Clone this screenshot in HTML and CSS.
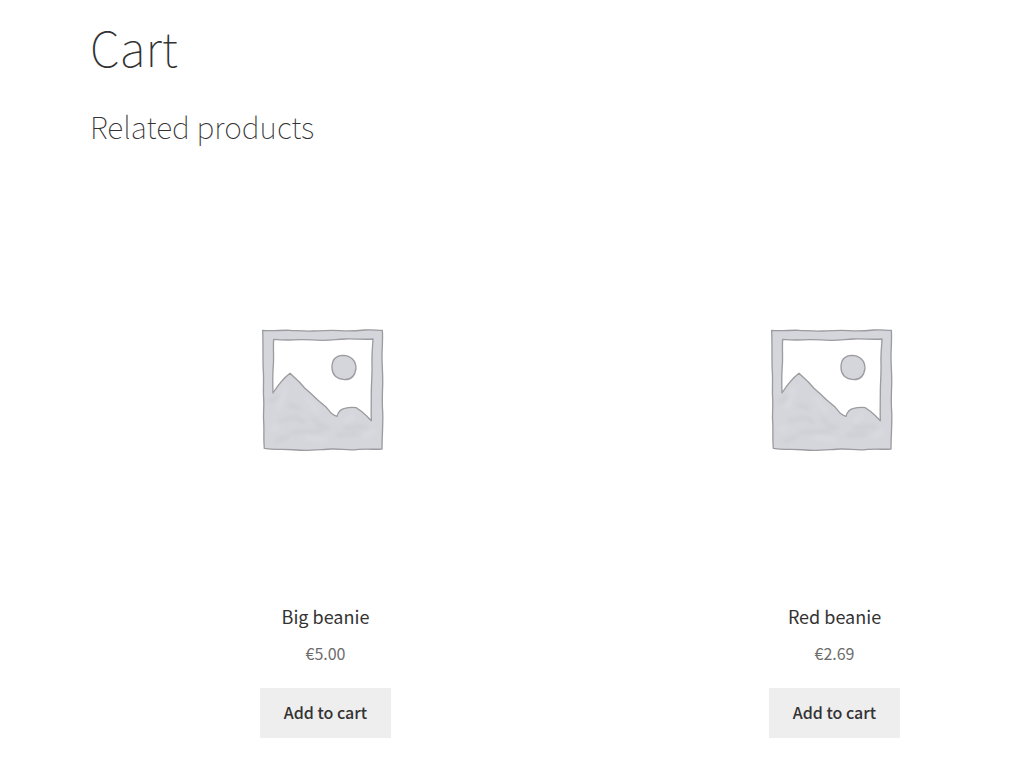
FILE: index.html
```html
<!DOCTYPE html>
<html lang="en">
<head>
    <meta charset="UTF-8">
    <meta name="viewport" content="width=device-width, initial-scale=1.0">
    <title>Cart</title>
    <link rel="stylesheet" href="styles.css">
</head>
<body>
    <!-- shared placeholder artwork -->
    <svg class="sprite" aria-hidden="true">
        <defs>
            <filter id="soft" x="-30%" y="-30%" width="160%" height="160%">
                <feGaussianBlur stdDeviation="6" />
            </filter>
        </defs>
        <symbol id="placeholder" viewBox="9 0 435 420">
            <path class="shape" fill-rule="evenodd" d="M38 31 C60 34 95 30 120 31 S165 34 190 33 S245 30 270 32 S325 32 345 30 S385 32 397 31 C399 55 396 85 396 110 S399 170 398 195 S396 250 398 275 S396 350 396 387 C375 389 345 386 320 389 S270 386 245 387 S190 391 165 391 S110 387 90 388 S55 387 43 385 C40 355 43 330 41 305 S43 260 41 235 S42 180 40 155 S40 80 38 31 Z
                M71 58 C69 85 72 110 70 135 S68 190 69 219 Q94 180 120 160 L148 186 L164 204 L181 219 L204 241 L229 262 L244 280 Q254 288 261 289 Q266 269 284 265 Q300 261 319 263 L334 274 L350 288 L364 302 C363 270 364 240 364 215 S367 160 366 130 S368 80 369 57 C345 59 310 56 285 57 S245 61 220 61 S170 58 150 59 S100 61 71 58 Z" />
            <path class="shape" d="M246 144 C245 121 256 107 279 106 C302 107 318 121 318 145 C315 167 303 179 284 179 C260 177 247 163 246 144 Z" />
            <g filter="url(#soft)">
                <path class="shade" d="M60 244 L85 230 M118 255 L148 264 M92 302 L137 292 L161 306 M190 294 L210 318 L234 323 M125 337 L215 334 M78 363 L112 350 M286 324 L350 320 M264 345 L322 342" />
                <path class="light" d="M105 205 L84 265 M172 237 L200 272 M170 350 L225 361 M310 285 L289 304 M64 328 L82 323 M345 350 L370 333" />
            </g>
        </symbol>
    </svg>

    <main class="content">
        <h1 class="page-title">Cart</h1>
        <section class="related">
            <h2 class="section-title">Related products</h2>
            <ul class="products">
                <li class="product">
                    <svg class="product-image" role="img" aria-label="Placeholder"><use href="#placeholder" /></svg>
                    <h3 class="product-title">Big beanie</h3>
                    <span class="price">€5.00</span>
                    <button class="button" type="button">Add to cart</button>
                </li>
                <li class="product">
                    <svg class="product-image" role="img" aria-label="Placeholder"><use href="#placeholder" /></svg>
                    <h3 class="product-title">Red beanie</h3>
                    <span class="price">€2.69</span>
                    <button class="button" type="button">Add to cart</button>
                </li>
            </ul>
        </section>
    </main>
</body>
</html>
```

FILE: styles.css
```css
* {
    box-sizing: border-box;
    margin: 0;
    padding: 0;
}
body {
    font-family: "Source Sans Pro", "Noto Sans CJK SC", "Open Sans", sans-serif;
    font-size: 16px;
    line-height: 24px;
    color: #6d6d6d;
    background: #fff;
    overflow-x: hidden;
}
.sprite {
    position: absolute;
    width: 0;
    height: 0;
}
.content {
    margin: 16px -47px 0 90px;
}
.page-title,
.section-title {
    color: #333;
    font-weight: 100;
}
.page-title {
    font-size: 48px;
    line-height: 60px;
    margin-bottom: 30px;
}
.section-title {
    font-size: 30px;
    line-height: 40px;
    margin-bottom: 174px;
}
.products {
    display: grid;
    grid-template-columns: 1fr 1fr;
    column-gap: 38px;
    list-style: none;
}
.product {
    display: flex;
    flex-direction: column;
    align-items: center;
}
.product-image {
    width: 145px;
    height: 140px;
    margin-bottom: 143px;
}
.shape {
    fill: #d5d6db;
    stroke: #9b9ba0;
    stroke-width: 4;
    stroke-linejoin: round;
}
.shade,
.light {
    fill: none;
    stroke: #c8c9cf;
    stroke-width: 12;
    stroke-linecap: round;
    opacity: 0.6;
}
.light {
    stroke: #dedfe4;
}
.product-title {
    color: #333;
    font-size: 18px;
    font-weight: 400;
    line-height: 26px;
    margin-bottom: 12px;
}
.price {
    margin-bottom: 23px;
}
.button {
    padding: 11px 24px 13px;
    border: none;
    background: #eee;
    color: #333;
    font-family: inherit;
    font-size: 16px;
    font-weight: 500;
    line-height: 26px;
    cursor: pointer;
}
.button:hover {
    background: #d5d5d5;
}
```
